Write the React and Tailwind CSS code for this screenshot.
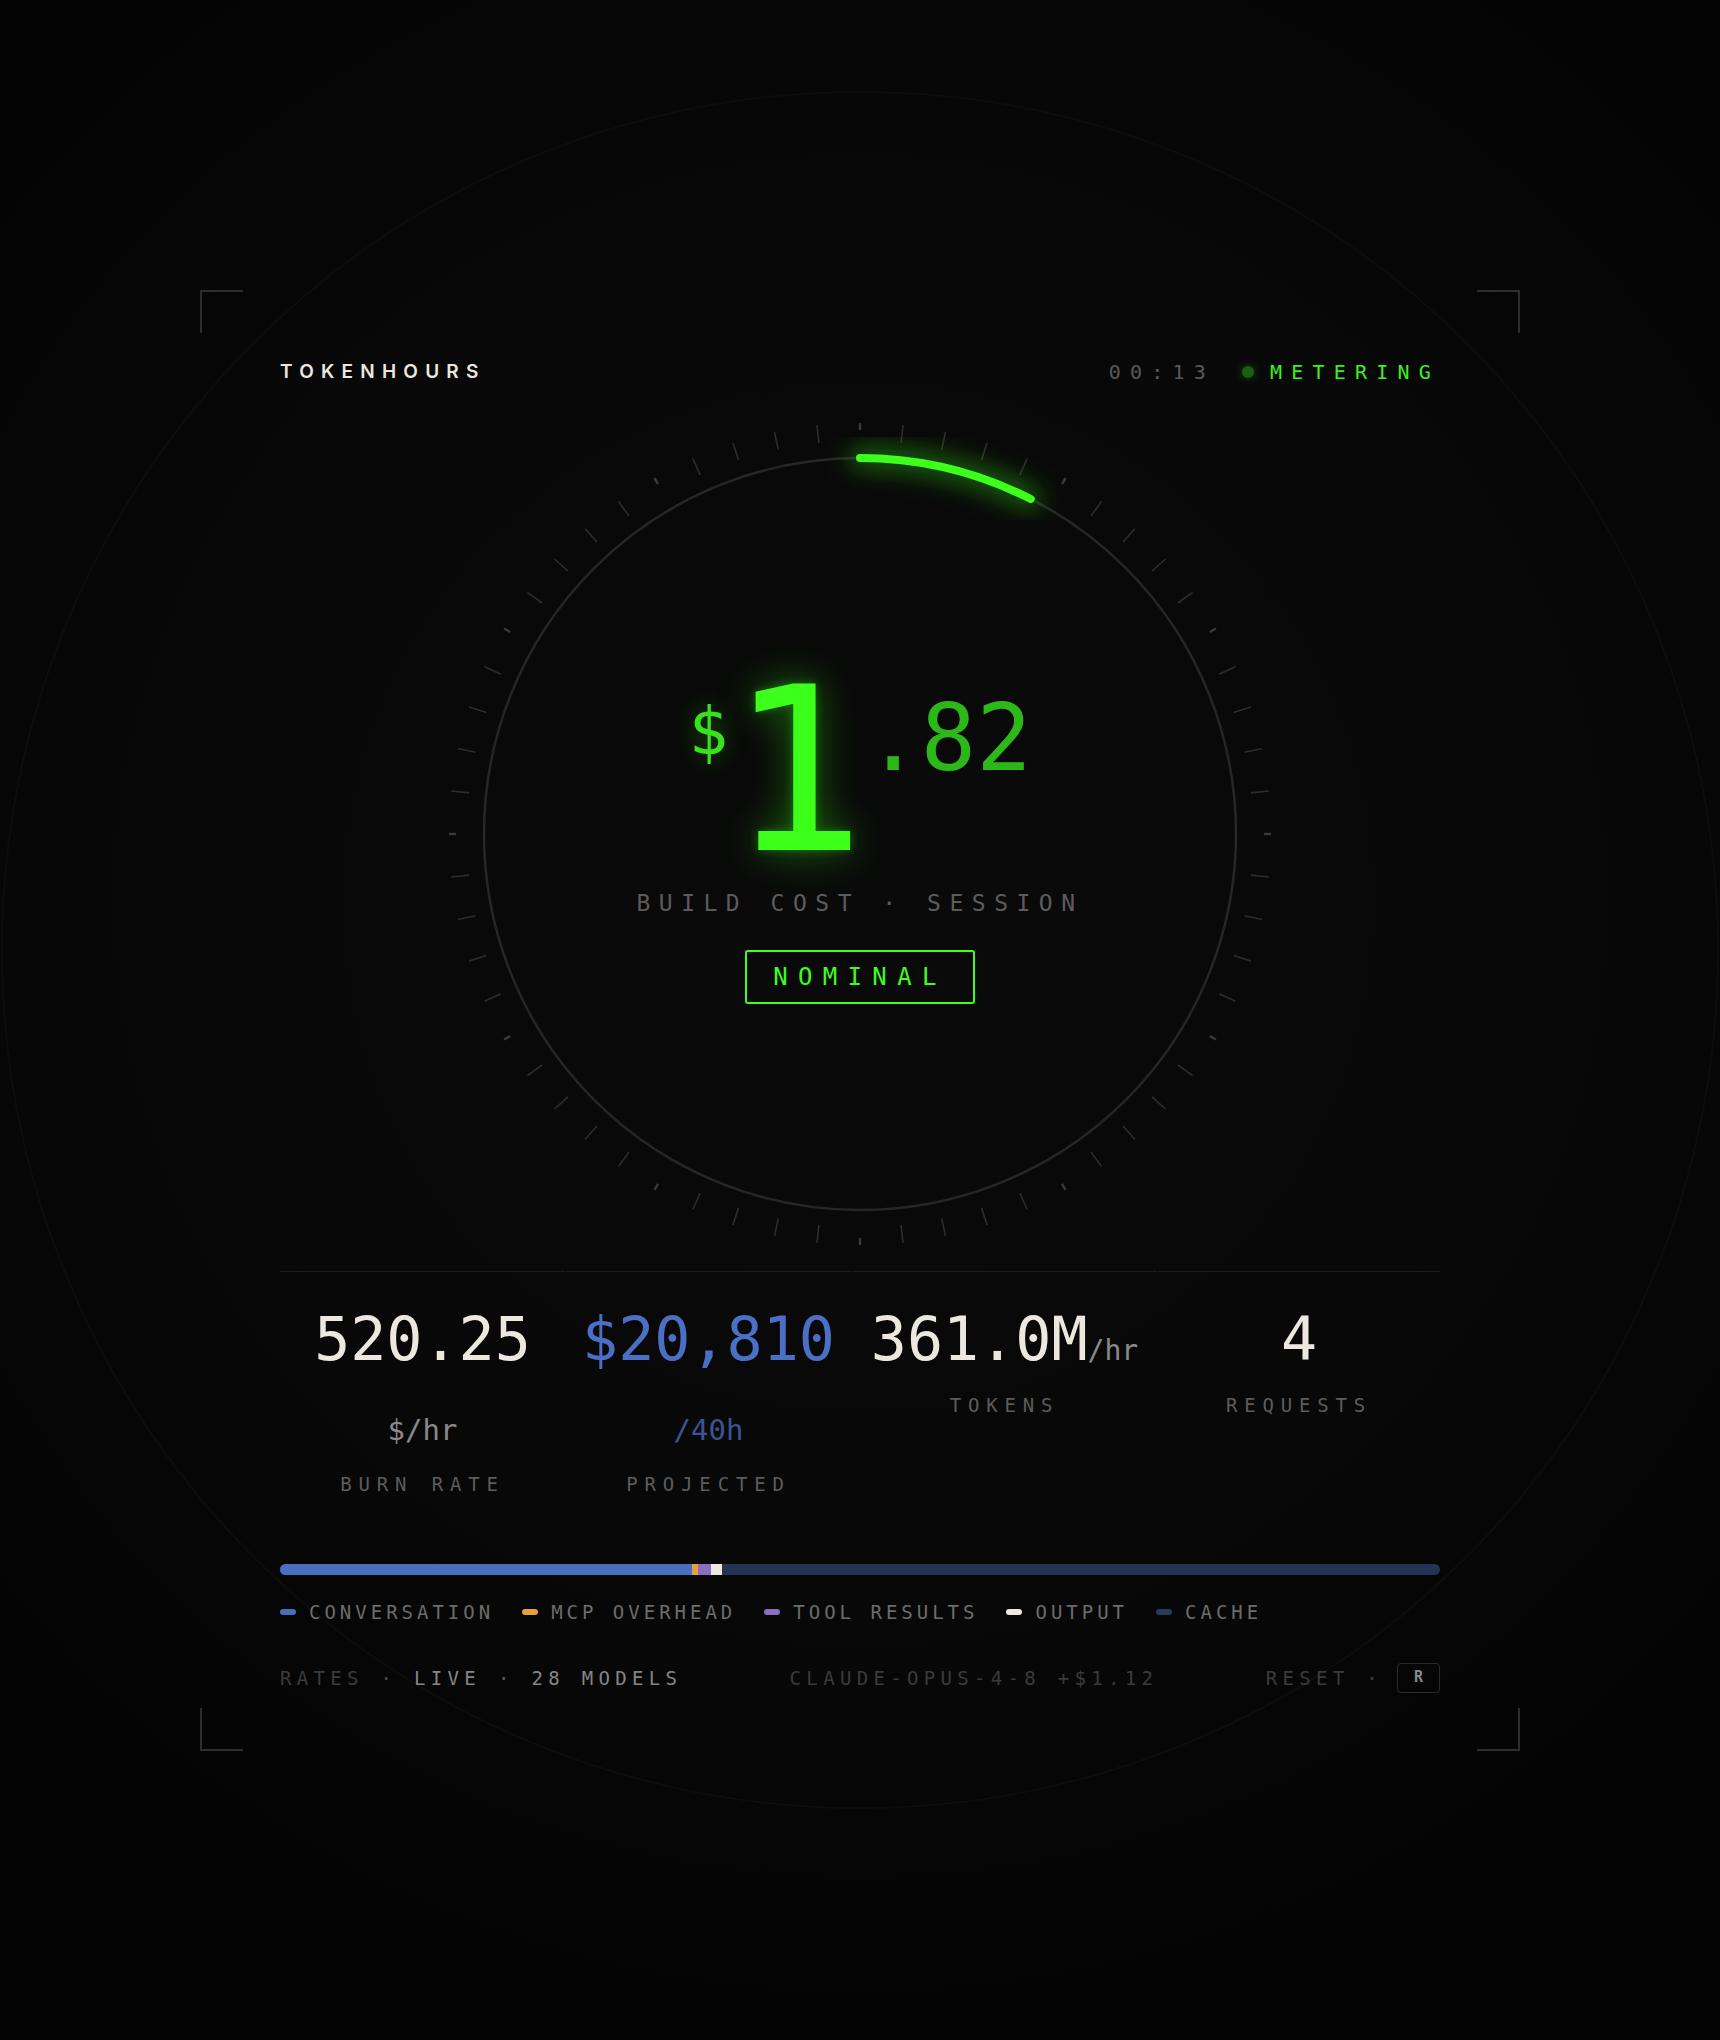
import React from "react";

function Dial() {
  const cx = 420;
  const cy = 420;
  const ticks = [];
  for (let i = 0; i < 60; i++) {
    const a = (i * 6 * Math.PI) / 180;
    const major = i % 5 === 0;
    const r1 = major ? 404 : 393;
    const r2 = 411;
    const s = Math.sin(a);
    const c = Math.cos(a);
    ticks.push(
      <line
        key={i}
        x1={cx + r1 * s}
        y1={cy - r1 * c}
        x2={cx + r2 * s}
        y2={cy - r2 * c}
        stroke={major ? "#3a3a3a" : "#2d2d2d"}
        strokeWidth={major ? 2.4 : 1.6}
      />
    );
  }
  const end = (27 * Math.PI) / 180;
  const ex = cx + 376 * Math.sin(end);
  const ey = cy - 376 * Math.cos(end);
  const arc = `M ${cx} ${cy - 376} A 376 376 0 0 1 ${ex} ${ey}`;
  return (
    <svg width="840" height="840" viewBox="0 0 840 840">
      <defs>
        <filter id="arcglow" x="-50%" y="-50%" width="200%" height="200%">
          <feGaussianBlur stdDeviation="12" />
        </filter>
      </defs>
      {ticks}
      <circle cx={cx} cy={cy} r={376} fill="none" stroke="#262626" strokeWidth="2.5" />
      <path d={arc} stroke="#2fd614" strokeOpacity="0.45" strokeWidth="22" fill="none" strokeLinecap="round" filter="url(#arcglow)" />
      <path d={arc} stroke="#3cff1a" strokeWidth="8" fill="none" strokeLinecap="round" />
    </svg>
  );
}

function Backdrop() {
  return (
    <svg className="absolute inset-0" width="1720" height="2040" viewBox="0 0 1720 2040">
      <defs>
        <radialGradient id="vig" cx="860" cy="900" r="1150" gradientUnits="userSpaceOnUse">
          <stop offset="0" stopColor="#0a0a0a" />
          <stop offset="0.6" stopColor="#080808" />
          <stop offset="1" stopColor="#040404" />
        </radialGradient>
      </defs>
      <rect width="1720" height="2040" fill="url(#vig)" />
      <circle cx="860" cy="950" r="858" fill="none" stroke="#0d0d0d" strokeWidth="2" />
    </svg>
  );
}

function Stat({ value, valueColor, unit, unitColor, inlineUnit, label }) {
  return (
    <div className="flex flex-col items-center border-t border-[#1e1e1e] pt-[32px]">
      <div className={`h-[70px] whitespace-nowrap text-[60px] leading-[70px] ${valueColor}`}>
        {value}
        {inlineUnit ? <span className="text-[28px] text-[#8a8a8a]">{inlineUnit}</span> : null}
      </div>
      {unit ? (
        <div className={`mt-[36px] h-[40px] text-[29px] leading-[40px] ${unitColor}`}>{unit}</div>
      ) : null}
      <div className={`${unit ? "mt-[22px]" : "mt-[19px]"} h-[24px] text-[19px] leading-[24px] tracking-[0.36em] text-[#5c5c5c]`}>
        {label}
      </div>
    </div>
  );
}

function Legend({ color, label }) {
  return (
    <div className="flex items-center gap-[13px]">
      <span className={`h-[6px] w-[16px] rounded-full ${color}`} />
      <span>{label}</span>
    </div>
  );
}

export default function App() {
  return (
    <div className="relative flex h-[2040px] w-full items-center justify-center overflow-hidden bg-[#070707] [font-family:'DejaVu_Sans_Mono','Liberation_Mono',monospace]">
      <Backdrop />
      <div className="relative w-[1320px] px-[80px] pb-[58px] pt-[70px]">
        <span className="absolute left-0 top-0 h-[43px] w-[43px] border-l-2 border-t-2 border-[#2e2e2e]" />
        <span className="absolute right-0 top-0 h-[43px] w-[43px] border-r-2 border-t-2 border-[#2e2e2e]" />
        <span className="absolute bottom-0 left-0 h-[43px] w-[43px] border-b-2 border-l-2 border-[#2e2e2e]" />
        <span className="absolute bottom-0 right-0 h-[43px] w-[43px] border-b-2 border-r-2 border-[#2e2e2e]" />

        <div className="flex h-[24px] items-center justify-between">
          <div className="text-[19px] font-semibold leading-[24px] tracking-[0.38em] text-[#ebe7de] [font-family:Inter,'Noto_Sans',sans-serif]">
            TOKENHOURS
          </div>
          <div className="flex items-center">
            <span className="text-[20px] leading-[24px] tracking-[0.46em] text-[#595959]">00:13</span>
            <span className="ml-[27px] h-[12px] w-[12px] rounded-full bg-[#1d5c14] shadow-[0_0_10px_rgba(57,255,20,0.3)]" />
            <span className="ml-[16px] text-[20px] leading-[24px] tracking-[0.46em] text-[#3cf01e]">METERING</span>
          </div>
        </div>

        <div className="mt-[30px] grid justify-items-center">
          <div className="[grid-area:1/1]">
            <Dial />
          </div>
          <div className="flex flex-col items-center pt-[272px] [grid-area:1/1]">
            <div className="flex items-start">
              <span className="mt-[13px] text-[66px] leading-none text-[#36e31c] [text-shadow:0_0_24px_rgba(57,255,20,0.35)]">$</span>
              <span className="text-[228px] leading-[170px] text-[#3cff1a] [text-shadow:0_0_40px_rgba(57,255,20,0.45),0_0_10px_rgba(57,255,20,0.3)]">
                1
              </span>
              <span className="mt-[7px] text-[92px] leading-none text-[#2cb819]">.82</span>
            </div>
            <div className="mt-[35px] h-[24px] text-[23px] leading-[24px] tracking-[0.37em] text-[#5c5c5c]">
              BUILD COST · SESSION
            </div>
            <div className="mt-[35px] h-[54px] rounded-[3px] border-2 border-[#3cff1a] px-[26px] text-[24px] leading-[50px] tracking-[0.43em] text-[#3cff1a]">
              NOMINAL
            </div>
          </div>
        </div>

        <div className="mt-[17px] grid grid-cols-[285px_285px_305px_1fr] gap-x-px">
          <Stat value="520.25" valueColor="text-[#ece8df]" unit="$/hr" unitColor="text-[#8a8a8a]" label="BURN RATE" />
          <Stat value="$20,810" valueColor="text-[#4a6fc4]" unit="/40h" unitColor="text-[#3a5592]" label="PROJECTED" />
          <Stat value="361.0M" valueColor="text-[#ece8df]" inlineUnit="/hr" label="TOKENS" />
          <Stat value="4" valueColor="text-[#ece8df]" label="REQUESTS" />
        </div>

        <div className="mt-[68px] flex h-[11px] overflow-hidden rounded-full bg-[#253352]">
          <div className="w-[412px] bg-[#4a6fc0]" />
          <div className="w-[6px] bg-[#e8a03a]" />
          <div className="w-[13px] bg-[#8a6fc0]" />
          <div className="w-[11px] bg-[#ede9e0]" />
        </div>

        <div className="mt-[25px] flex h-[24px] items-center gap-[28px] text-[19px] leading-[24px] tracking-[0.21em] text-[#6c6c6c]">
          <Legend color="bg-[#4a6fc0]" label="CONVERSATION" />
          <Legend color="bg-[#e8a03a]" label="MCP OVERHEAD" />
          <Legend color="bg-[#8a6fc0]" label="TOOL RESULTS" />
          <Legend color="bg-[#ede9e0]" label="OUTPUT" />
          <Legend color="bg-[#2a3a5e]" label="CACHE" />
        </div>

        <div className="mt-[39px] flex h-[30px] items-center justify-between text-[19px] leading-[30px] tracking-[0.28em]">
          <div className="whitespace-nowrap">
            <span className="text-[#3b3b3b]">RATES</span>
            <span className="text-[#4a4a4a]"> · </span>
            <span className="text-[#858585]">LIVE</span>
            <span className="text-[#5a5a5a]"> · </span>
            <span className="text-[#858585]">28 MODELS</span>
          </div>
          <div className="whitespace-nowrap text-[#3b3b3b]">CLAUDE-OPUS-4-8 +$1.12</div>
          <div className="flex items-center">
            <span className="whitespace-nowrap text-[#3b3b3b]">RESET ·</span>
            <span className="ml-[14px] flex h-[30px] w-[43px] items-center justify-center rounded-[4px] border-[1.5px] border-[#2a2a2a] text-[15px] font-bold leading-none tracking-normal text-[#8a8a8a]">
              R
            </span>
          </div>
        </div>
      </div>
    </div>
  );
}
